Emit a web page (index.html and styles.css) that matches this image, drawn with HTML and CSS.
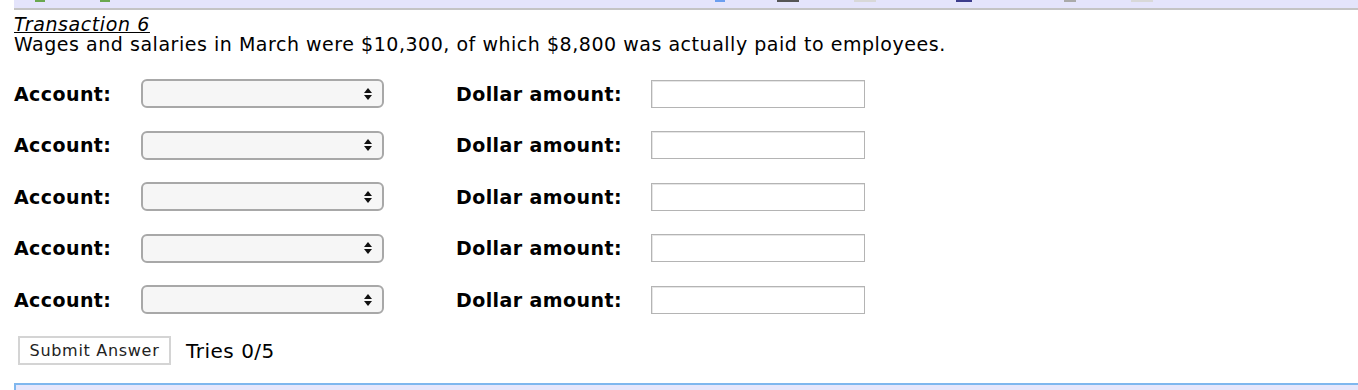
FILE: index.html
```html
<!DOCTYPE html>
<html>
<head>
<meta charset="utf-8">
<link rel="stylesheet" href="styles.css">
</head>
<body>
<div class="page">
  <div class="toolbar">
    <span class="tb tb-green" style="margin-left:21px"></span>
    <span class="tb tb-green" style="margin-left:55px"></span>
    <span class="tb tb-blue" style="margin-left:605px"></span>
    <span class="tb tb-dark" style="margin-left:52px"></span>
    <span class="tb tb-light" style="margin-left:55px"></span>
    <span class="tb tb-navy" style="margin-left:80px"></span>
    <span class="tb tb-gray" style="margin-left:92px"></span>
    <span class="tb tb-light" style="margin-left:55px"></span>
  </div>
  <div class="question">
    <div class="title">Transaction 6</div>
    <div class="desc">Wages and salaries in March were $10,300, of which $8,800 was actually paid to employees.</div>
  </div>
  <div class="entries">
    <div class="label">Account:</div>
    <div class="select"><span class="arrows"><i class="up"></i><i class="down"></i></span></div>
    <div class="label">Dollar amount:</div>
    <div class="input"></div>

    <div class="label">Account:</div>
    <div class="select"><span class="arrows"><i class="up"></i><i class="down"></i></span></div>
    <div class="label">Dollar amount:</div>
    <div class="input"></div>

    <div class="label">Account:</div>
    <div class="select"><span class="arrows"><i class="up"></i><i class="down"></i></span></div>
    <div class="label">Dollar amount:</div>
    <div class="input"></div>

    <div class="label">Account:</div>
    <div class="select"><span class="arrows"><i class="up"></i><i class="down"></i></span></div>
    <div class="label">Dollar amount:</div>
    <div class="input"></div>

    <div class="label">Account:</div>
    <div class="select"><span class="arrows"><i class="up"></i><i class="down"></i></span></div>
    <div class="label">Dollar amount:</div>
    <div class="input"></div>
  </div>
  <div class="submit-row">
    <button class="submit">Submit Answer</button>
    <span class="tries">Tries 0/5</span>
  </div>
  <div class="next-box"></div>
</div>
</body>
</html>
```
FILE: styles.css
```css
html, body {
  margin: 0;
  padding: 0;
  background: #ffffff;
}
.page {
  padding-left: 14px;
  font-family: "DejaVu Sans", Verdana, sans-serif;
  color: #000;
}
.toolbar {
  height: 8px;
  background: #e4e4fb;
  border-bottom: 2px solid #c4c4c4;
  display: flex;
  align-items: flex-start;
  overflow: hidden;
}
.tb {
  display: block;
  height: 2px;
  width: 12px;
  flex: none;
}
.tb-green { background: #6aa84f; width: 10px; }
.tb-blue { background: #6b9ef0; width: 10px; }
.tb-dark { background: #555; width: 22px; }
.tb-light { background: #d8d8d8; width: 22px; }
.tb-navy { background: #3c3c8c; width: 16px; }
.tb-gray { background: #aaa; width: 12px; }

.question {
  margin-top: 4px;
  font-size: 19px;
  letter-spacing: 0.53px;
  line-height: 20px;
}
.title {
  font-style: italic;
  text-decoration: underline;
  letter-spacing: 0.6px;
}
.entries {
  margin-top: 25px;
  display: grid;
  grid-template-columns: 127px 315px 195px 214px;
  row-gap: 22.5px;
  align-items: center;
}
.label {
  font-weight: bold;
  font-size: 19px;
  letter-spacing: 0.42px;
}
.select {
  width: 243px;
  height: 29px;
  box-sizing: border-box;
  border: 2px solid #a8a8a8;
  border-radius: 6px;
  background: #f6f6f6;
  display: flex;
  justify-content: flex-end;
  align-items: center;
  padding-right: 10px;
}
.arrows {
  display: flex;
  flex-direction: column;
  gap: 2px;
}
.arrows i {
  display: block;
  width: 0;
  height: 0;
  border-left: 4px solid transparent;
  border-right: 4px solid transparent;
}
.arrows .up { border-bottom: 5px solid #111; }
.arrows .down { border-top: 5px solid #111; }
.input {
  width: 214px;
  height: 28px;
  box-sizing: border-box;
  border: 1px solid #b4b4b4;
  box-shadow: inset 1px 1px 0 #e6e6e6;
  background: #fff;
}
.submit-row {
  margin-top: 22px;
  display: flex;
  align-items: center;
  gap: 15px;
  padding-left: 4px;
}
.submit {
  height: 29px;
  width: 153px;
  box-sizing: border-box;
  border: 2px solid #d4d4d4;
  background: #fff;
  font-family: "DejaVu Sans", Verdana, sans-serif;
  font-size: 16px;
  letter-spacing: 0.7px;
  color: #222;
  padding: 0;
}
.tries {
  font-size: 20px;
  letter-spacing: 0.5px;
}
.next-box {
  margin-top: 18px;
  height: 20px;
  border-top: 2px solid #7fb7ee;
  border-left: 2px solid #7fb7ee;
  background: #e6e6fb;
}
```
